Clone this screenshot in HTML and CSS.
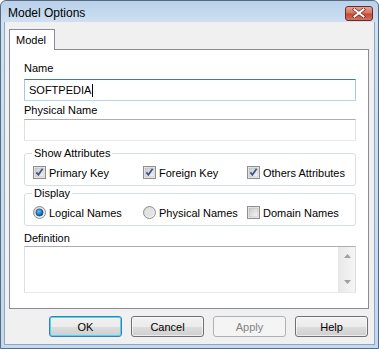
FILE: index.html
```html
<!DOCTYPE html>
<html>
<head>
<meta charset="utf-8">
<link rel="stylesheet" href="styles.css">
</head>
<body>
<div class="window">
  <div class="titlebar">
    <span class="title">Model Options</span>
    <span class="close">
      <svg width="14" height="10" viewBox="0 0 14 10"><path d="M2.5 1.5 L11.5 8.5 M11.5 1.5 L2.5 8.5" stroke="#6b2020" stroke-width="3.4" stroke-linecap="square"/><path d="M2.5 1.5 L11.5 8.5 M11.5 1.5 L2.5 8.5" stroke="#fff" stroke-width="2" stroke-linecap="square"/></svg>
    </span>
  </div>
  <div class="client">
    <div class="tabs"><div class="tab">Model</div></div>
    <div class="panel">
      <div class="label">Name</div>
      <div class="input focus"><span class="val">SOFTPEDIA</span><span class="caret"></span></div>
      <div class="label lbl2">Physical Name</div>
      <div class="input"></div>
      <fieldset class="group">
        <legend>Show Attributes</legend>
        <div class="row">
          <span class="opt"><svg class="cb" width="13" height="13" viewBox="0 0 13 13"><defs><linearGradient id="g1" x1="0" y1="0" x2="1" y2="1"><stop offset="0" stop-color="#c9c9c9"/><stop offset="1" stop-color="#f7f7f7"/></linearGradient></defs><rect x="0.5" y="0.5" width="12" height="12" fill="#f4f4f4" stroke="#8e8f8f"/><rect x="2" y="2" width="9" height="9" fill="url(#g1)" stroke="#b5b5b5" stroke-width="0.6"/><path d="M3.4 6.4 L5.4 8.8 L9.6 2.8" fill="none" stroke="#3e5493" stroke-width="1.8"/></svg>Primary Key</span>
          <span class="opt"><svg class="cb" width="13" height="13" viewBox="0 0 13 13"><rect x="0.5" y="0.5" width="12" height="12" fill="#f4f4f4" stroke="#8e8f8f"/><rect x="2" y="2" width="9" height="9" fill="url(#g1)" stroke="#b5b5b5" stroke-width="0.6"/><path d="M3.4 6.4 L5.4 8.8 L9.6 2.8" fill="none" stroke="#3e5493" stroke-width="1.8"/></svg>Foreign Key</span>
          <span class="opt"><svg class="cb" width="13" height="13" viewBox="0 0 13 13"><rect x="0.5" y="0.5" width="12" height="12" fill="#f4f4f4" stroke="#8e8f8f"/><rect x="2" y="2" width="9" height="9" fill="url(#g1)" stroke="#b5b5b5" stroke-width="0.6"/><path d="M3.4 6.4 L5.4 8.8 L9.6 2.8" fill="none" stroke="#3e5493" stroke-width="1.8"/></svg>Others Attributes</span>
        </div>
      </fieldset>
      <fieldset class="group g2">
        <legend>Display</legend>
        <div class="row">
          <span class="opt"><svg class="cb" width="13" height="13" viewBox="0 0 13 13"><defs><radialGradient id="rb" cx="0.4" cy="0.35" r="0.7"><stop offset="0" stop-color="#5fc0f5"/><stop offset="0.6" stop-color="#1a7cc4"/><stop offset="1" stop-color="#0b3f75"/></radialGradient><linearGradient id="rg" x1="0" y1="0" x2="1" y2="1"><stop offset="0" stop-color="#cfcfcf"/><stop offset="1" stop-color="#fafafa"/></linearGradient></defs><circle cx="6.5" cy="6.5" r="6" fill="url(#rg)" stroke="#8e8f8f"/><circle cx="6.5" cy="6.5" r="3.6" fill="url(#rb)" stroke="#123f6d" stroke-width="0.6"/></svg>Logical Names</span>
          <span class="opt"><svg class="cb" width="13" height="13" viewBox="0 0 13 13"><circle cx="6.5" cy="6.5" r="6" fill="url(#rg)" stroke="#8e8f8f"/><circle cx="6.5" cy="6.5" r="4" fill="#e2e2e2"/></svg>Physical Names</span>
          <span class="opt"><svg class="cb" width="13" height="13" viewBox="0 0 13 13"><rect x="0.5" y="0.5" width="12" height="12" fill="#f4f4f4" stroke="#8e8f8f"/><rect x="2" y="2" width="9" height="9" fill="url(#g1)" stroke="#b5b5b5" stroke-width="0.6"/></svg>Domain Names</span>
        </div>
      </fieldset>
      <div class="label lbl3">Definition</div>
      <div class="textarea">
        <div class="ta-body"></div>
        <div class="scroll">
          <svg width="7" height="4" viewBox="0 0 7 4"><path d="M0 4 L3.5 0 L7 4 Z" fill="#a0a0a0"/></svg>
          <svg width="7" height="4" viewBox="0 0 7 4"><path d="M0 0 L3.5 4 L7 0 Z" fill="#a0a0a0"/></svg>
        </div>
      </div>
    </div>
    <div class="buttons">
      <div class="btn default">OK</div>
      <div class="btn">Cancel</div>
      <div class="btn disabled">Apply</div>
      <div class="btn">Help</div>
    </div>
  </div>
</div>
</body>
</html>
```

FILE: styles.css
```css
* { box-sizing: border-box; }
html, body { margin: 0; padding: 0; }
body {
  width: 379px;
  height: 349px;
  overflow: hidden;
  font-family: "Liberation Sans", Arial, sans-serif;
  font-size: 11px;
  color: #000;
  background: #fff;
}
.window {
  width: 379px;
  height: 349px;
  border: 1px solid #5a6b80;
  border-radius: 6px 6px 0 0;
  background: linear-gradient(to bottom, #b9d1ea 0px, #cfe0f2 22px, #c4d8ee 100%);
  display: flex;
  flex-direction: column;
}
.titlebar {
  height: 21px;
  flex: none;
  display: flex;
  align-items: center;
  justify-content: space-between;
  padding: 0 5px 0 7px;
}
.title {
  font-size: 12px;
  color: #000;
  margin-top: 2px;
}
.close {
  width: 28px;
  height: 15px;
  border: 1px solid #6d2a2a;
  border-radius: 3px;
  background: linear-gradient(to bottom, #e8a493 0%, #d7735f 45%, #c24a35 55%, #d2735e 100%);
  display: flex;
  align-items: center;
  justify-content: center;
  margin-top: 3px;
}
.client {
  flex: 1;
  margin: 0 3px 3px 3px;
  background: #f0f0f0;
  border-left: 1px solid #8ca6c4;
  border-right: 1px solid #8ca6c4;
  border-bottom: 1px solid #8ca6c4;
  padding: 7px 5px 0 4px;
  display: flex;
  flex-direction: column;
}
.tabs {
  display: flex;
  height: 20px;
  position: relative;
  z-index: 1;
}
.tab {
  width: 46px;
  height: 21px;
  background: #fff;
  border: 1px solid #898c95;
  border-bottom: none;
  padding: 4px 0 0 6px;
  font-size: 11px;
}
.panel {
  width: 360px;
  height: 260px;
  background: #fff;
  border: 1px solid #898c95;
  padding: 11px 12px 0 14px;
  display: flex;
  flex-direction: column;
}
.label { line-height: 15px; height: 15px; }
.lbl2 { margin-top: 2px; }
.lbl3 { margin-top: 5px; }
.input {
  height: 22px;
  margin-top: 3px;
  border: 1px solid #dbdfe6;
  border-top-color: #abadb3;
  border-bottom-color: #e3e9ef;
  background: #fff;
  display: flex;
  align-items: center;
  padding-left: 4px;
}
.lbl2 + .input { margin-top: 1px; }
.input.focus {
  border-color: #b5cfe7;
  border-top-color: #3d7bad;
  border-bottom-color: #b7d5ea;
  border-left-color: #a4c9e3;
  border-right-color: #a4c9e3;
}
.caret {
  display: inline-block;
  width: 1px;
  height: 13px;
  background: #000;
  margin-left: 1px;
}
.group {
  margin: 5px 0 0 0;
  padding: 4px 8px 5px 8px;
  border: 1px solid #d5dfe5;
  border-radius: 3px;
  min-width: 0;
}
.g2 { margin-top: 0; }
.group legend {
  padding: 0 2px;
  margin-left: -1px;
  line-height: 15px;
  font-size: 11px;
}
.row {
  display: grid;
  grid-template-columns: 110px 104px auto;
  height: 15px;
  align-items: center;
}
.opt {
  display: flex;
  align-items: center;
  white-space: nowrap;
}
.cb { flex: none; margin-right: 3px; }
.textarea {
  height: 47px;
  margin-top: 0;
  border: 1px solid #dbdfe6;
  border-top-color: #abadb3;
  border-bottom-color: #e3e9ef;
  display: flex;
}
.ta-body { flex: 1; background: #fff; }
.scroll {
  width: 17px;
  background: linear-gradient(to right, #e9e9e9, #f5f5f5);
  border-left: 1px solid #e6e6e6;
  display: flex;
  flex-direction: column;
  align-items: center;
  justify-content: space-between;
  padding: 7px 0 8px 0;
}
.buttons {
  display: flex;
  justify-content: flex-end;
  gap: 9px;
  margin-top: 7px;
  padding-right: 1px;
}
.btn {
  width: 73px;
  height: 21px;
  border: 1px solid #707070;
  border-radius: 3px;
  background: linear-gradient(to bottom, #f2f2f2 0%, #ebebeb 50%, #dddddd 51%, #cfcfcf 100%);
  display: flex;
  align-items: center;
  justify-content: center;
  font-size: 11px;
  box-shadow: inset 0 0 0 1px rgba(255,255,255,0.6);
}
.btn.default {
  border-color: #3c7fb1;
  box-shadow: inset 0 0 0 1px #48d7fb;
}
.btn.disabled {
  border-color: #adb2b5;
  background: #f4f4f4;
  color: #838383;
  box-shadow: none;
}
```
